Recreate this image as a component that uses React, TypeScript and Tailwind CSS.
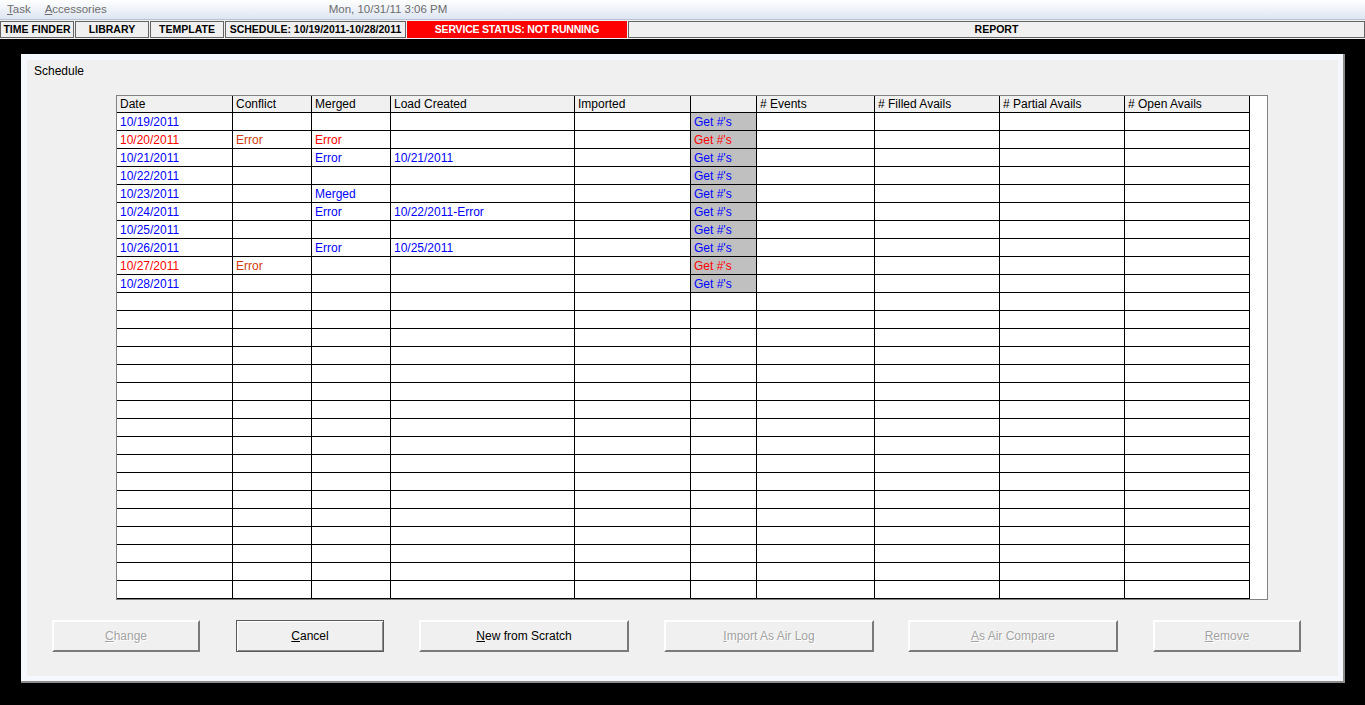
import React from "react";

type Row = {
  date: string;
  dateRed?: boolean;
  conflict?: string;
  merged?: string;
  mergedRed?: boolean;
  load?: string;
};

const rows: Row[] = [
  { date: "10/19/2011" },
  { date: "10/20/2011", dateRed: true, conflict: "Error", merged: "Error", mergedRed: true },
  { date: "10/21/2011", merged: "Error", load: "10/21/2011" },
  { date: "10/22/2011" },
  { date: "10/23/2011", merged: "Merged" },
  { date: "10/24/2011", merged: "Error", load: "10/22/2011-Error" },
  { date: "10/25/2011" },
  { date: "10/26/2011", merged: "Error", load: "10/25/2011" },
  { date: "10/27/2011", dateRed: true, conflict: "Error" },
  { date: "10/28/2011" },
];

const cols = [
  { label: "Date", w: "w-[116px]" },
  { label: "Conflict", w: "w-[79px]" },
  { label: "Merged", w: "w-[79px]" },
  { label: "Load Created", w: "w-[184px]" },
  { label: "Imported", w: "w-[116px]" },
  { label: "", w: "w-[66px]" },
  { label: "# Events", w: "w-[118px]" },
  { label: "# Filled Avails", w: "w-[125px]" },
  { label: "# Partial Avails", w: "w-[125px]" },
  { label: "# Open Avails", w: "w-[125px]" },
];

const Cell = ({ w, className = "", children }: { w: string; className?: string; children?: React.ReactNode }) => (
  <div
    className={`${w} shrink-0 h-full border-r border-b border-black pl-[3px] pt-[1px] leading-[16px] whitespace-nowrap ${className}`}
  >
    {children}
  </div>
);

const Tab = ({ w, children, className = "" }: { w: string; children: React.ReactNode; className?: string }) => (
  <div
    className={`${w} h-[17px] flex items-center justify-center border border-[#646464] bg-[#f0f0f0] text-[10.5px] font-bold text-black leading-none whitespace-nowrap ${className}`}
  >
    {children}
  </div>
);

const Button = ({
  w,
  disabled,
  isDefault,
  className = "",
  children,
}: {
  w: string;
  disabled?: boolean;
  isDefault?: boolean;
  className?: string;
  children: React.ReactNode;
}) => (
  <div
    className={`${w} h-[32px] shrink-0 flex items-center justify-center bg-[#f0f0f0] text-[12px] ${
      isDefault
        ? "border border-[#5a5a5a] shadow-[inset_1px_1px_0_#ffffff,inset_-1px_-1px_0_#8a8a8a]"
        : "border-t-2 border-l-2 border-t-white border-l-white border-r-2 border-b-2 border-r-[#7a7a7a] border-b-[#7a7a7a]"
    } ${disabled ? "text-[#a3a3a3] [text-shadow:1px_1px_0_#ffffff]" : "text-black"} ${className}`}
  >
    {children}
  </div>
);

export default function App() {
  const blank = 27 - rows.length;
  return (
    <div className="w-[1365px] h-[705px] bg-black overflow-hidden" style={{ fontFamily: '"Liberation Sans", Arial, sans-serif' }}>
      {/* menu bar */}
      <div className="h-[20px] flex items-center bg-gradient-to-b from-white to-[#dde5f2] border-b border-[#b8c2d4] text-[11.5px] text-[#6d6d6d]">
        <span className="ml-[7px]">
          <span className="underline">T</span>ask
        </span>
        <span className="ml-[14px]">
          <span className="underline">A</span>ccessories
        </span>
        <span className="ml-[222px]">Mon, 10/31/11 3:06 PM</span>
      </div>

      {/* tab row */}
      <div className="h-[19px] flex items-center gap-[1px] bg-[#f0f0f0]">
        <Tab w="w-[74px]">TIME FINDER</Tab>
        <Tab w="w-[74px]">LIBRARY</Tab>
        <Tab w="w-[74px]">TEMPLATE</Tab>
        <Tab w="w-[181px]">SCHEDULE: 10/19/2011-10/28/2011</Tab>
        <div className="w-[220px] h-[17px] flex items-center justify-center bg-[#ff0000] text-white text-[10.5px] font-bold leading-none tracking-[-0.2px]">
          SERVICE STATUS: NOT RUNNING
        </div>
        <Tab w="flex-1">REPORT</Tab>
      </div>

      {/* panel */}
      <div className="mt-[15px] ml-[21px] w-[1324px] h-[629px] bg-[#f5f8fc] border-r-2 border-b-2 border-[#8c8c8c] pt-[6px] pl-[6px] pr-[5px] pb-[5px]">
        <div className="w-full h-full bg-[#f0f0f0] pt-[4px]">
          <div className="pl-[7px] h-[14px] leading-[14px] text-[12px] text-black">Schedule</div>

          {/* table */}
          <div className="mt-[17px] ml-[89px] w-[1152px] h-[505px] border border-[#828282] bg-white text-[12px] overflow-hidden">
            <div className="flex h-[17px]">
              {cols.map((c, i) => (
                <Cell key={i} w={c.w} className="bg-[#f0f0f0] text-black !pt-0">
                  {c.label}
                </Cell>
              ))}
              <div className="flex-1 bg-white" />
            </div>

            {rows.map((r, i) => (
              <div key={i} className="flex h-[18px]">
                <Cell w={cols[0].w} className={r.dateRed ? "text-[#ff0000]" : "text-[#0000ff]"}>
                  {r.date}
                </Cell>
                <Cell w={cols[1].w} className="text-[#d03a10]">
                  {r.conflict}
                </Cell>
                <Cell w={cols[2].w} className={r.mergedRed ? "text-[#ff0000]" : "text-[#0000ff]"}>
                  {r.merged}
                </Cell>
                <Cell w={cols[3].w} className="text-[#0000ff]">
                  {r.load}
                </Cell>
                <Cell w={cols[4].w} />
                <Cell w={cols[5].w} className={`bg-[#c0c0c0] ${r.dateRed ? "text-[#ff0000]" : "text-[#0000ff]"}`}>
                  Get #'s
                </Cell>
                <Cell w={cols[6].w} />
                <Cell w={cols[7].w} />
                <Cell w={cols[8].w} />
                <Cell w={cols[9].w} />
                <div className="flex-1" />
              </div>
            ))}

            {Array.from({ length: blank }).map((_, i) => (
              <div key={`b${i}`} className="flex h-[18px]">
                {cols.map((c, j) => (
                  <Cell key={j} w={c.w} />
                ))}
                <div className="flex-1" />
              </div>
            ))}
          </div>

          {/* buttons */}
          <div className="mt-[20px] pl-[25px] flex">
            <Button w="w-[148px]" disabled>
              <span className="underline">C</span>hange
            </Button>
            <Button w="w-[148px]" isDefault className="ml-[36px]">
              <span className="underline">C</span>ancel
            </Button>
            <Button w="w-[210px]" className="ml-[35px]">
              <span className="underline">N</span>ew from Scratch
            </Button>
            <Button w="w-[210px]" disabled className="ml-[35px]">
              <span className="underline">I</span>mport As Air Log
            </Button>
            <Button w="w-[210px]" disabled className="ml-[34px]">
              <span className="underline">A</span>s Air Compare
            </Button>
            <Button w="w-[148px]" disabled className="ml-[35px]">
              <span className="underline">R</span>emove
            </Button>
          </div>
        </div>
      </div>
    </div>
  );
}
